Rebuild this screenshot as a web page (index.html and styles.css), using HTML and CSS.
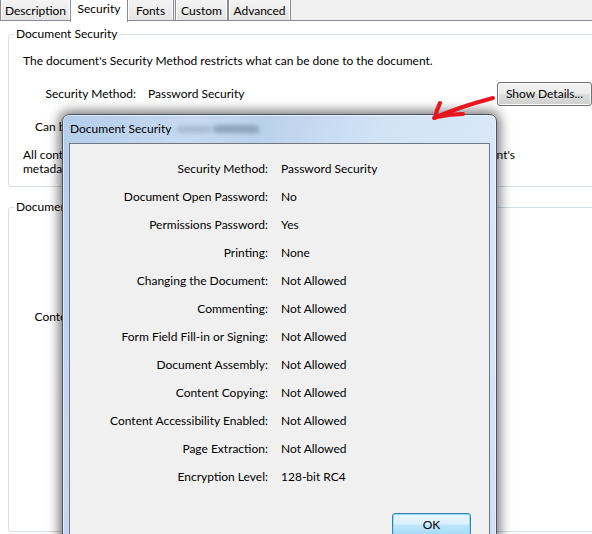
FILE: index.html
```html
<!DOCTYPE html>
<html>
<head>
<meta charset="utf-8">
<link rel="stylesheet" href="styles.css">
</head>
<body>
<div class="window">
  <div class="tabs">
    <div class="tab t-desc">Description</div>
    <div class="tab sel t-sec">Security</div>
    <div class="tab t-fonts">Fonts</div>
    <div class="tab t-custom">Custom</div>
    <div class="tab t-adv">Advanced</div>
  </div>
  <div class="panel">
    <fieldset class="group g1">
      <legend>Document Security</legend>
      <p class="intro">The document's Security Method restricts what can be done to the document.</p>
      <div class="props">
        <span class="l">Security Method:</span>
        <span class="v">Password Security</span>
        <button class="btn">Show Details...</button>
        <span class="l">Can be Opened by:</span>
        <span class="v"></span>
        <span></span>
      </div>
      <p class="allc">All contents of the document are encrypted and search engines cannot access the document's<br>metadata.</p>
    </fieldset>
    <fieldset class="group g2">
      <legend>Document Restrictions Summary</legend>
      <div class="sum">
        <span class="l">Content Copying for Accessibility:</span><span></span>
      </div>
    </fieldset>
  </div>
</div>

<div class="dlg">
  <div class="dlg-title">
    <span class="dlg-name">Document Security</span>
    <span class="blur"><span class="b1"></span><span class="b2"></span></span>
  </div>
  <div class="dlg-client">
    <div class="info">
      <span class="l">Security Method:</span><span>Password Security</span>
      <span class="l">Document Open Password:</span><span>No</span>
      <span class="l">Permissions Password:</span><span>Yes</span>
      <span class="l">Printing:</span><span>None</span>
      <span class="l">Changing the Document:</span><span>Not Allowed</span>
      <span class="l">Commenting:</span><span>Not Allowed</span>
      <span class="l">Form Field Fill-in or Signing:</span><span>Not Allowed</span>
      <span class="l">Document Assembly:</span><span>Not Allowed</span>
      <span class="l">Content Copying:</span><span>Not Allowed</span>
      <span class="l">Content Accessibility Enabled:</span><span>Not Allowed</span>
      <span class="l">Page Extraction:</span><span>Not Allowed</span>
      <span class="l">Encryption Level:</span><span>128-bit RC4</span>
    </div>
    <div class="ok-row"><button class="ok">OK</button></div>
  </div>
</div>

<svg class="arrow" width="592" height="534" viewBox="0 0 592 534">
  <path d="M493,98 C474,103 452,110 434,118" />
  <path d="M435,118 C436,112 438,107 440,103" />
  <path d="M437,117 C446,115 455,114 463,114" />
</svg>
</body>
</html>
```

FILE: styles.css
```css
html, body {
  margin: 0;
  width: 592px;
  height: 534px;
  overflow: hidden;
}
body {
  position: relative;
  font: 12px/14px Lato, "Liberation Sans", sans-serif;
  color: #000;
  background: #fff;
}
.window {
  width: 620px;
}
.tabs {
  display: flex;
  height: 20px;
  border-bottom: 1px solid #898c95;
  background: #f0f0f0;
  position: relative;
}
.tab {
  box-sizing: border-box;
  height: 20px;
  border: 1px solid #898c95;
  border-top: none;
  border-bottom: none;
  background: linear-gradient(#f4f4f4, #e4e4e4);
  box-shadow: inset 1px 0 #fdfdfd, inset -1px 0 #fdfdfd;
  display: flex;
  align-items: center;
  justify-content: center;
  padding-top: 2px;
}
.tab.sel {
  background: #fff;
  box-shadow: none;
  height: 22px;
  margin-bottom: -2px;
  padding-top: 0;
  padding-bottom: 4px;
  position: relative;
  z-index: 1;
}
.t-desc { width: 71px; }
.t-sec { width: 58px; margin-left: -1px; }
.t-fonts { width: 47px; margin-left: -1px; }
.t-custom { width: 53px; margin-left: 1px; }
.t-adv { width: 63px; }

.panel {
  padding-top: 6px;
}
.group {
  margin: 0 8px;
  border: 1px solid #d5dfe5;
  border-radius: 3px;
  min-width: 0;
}
.group legend {
  padding: 0 2px;
  margin-left: -9px;
  line-height: 14px;
}
.g1 {
  padding: 13px 19px 10px 14px;
}
.intro, .allc {
  margin: 0;
}
.props {
  display: grid;
  grid-template-columns: 113px 1fr auto;
  column-gap: 12px;
  row-gap: 14px;
  align-items: center;
  margin-top: 14px;
}
.props .l, .sum .l, .info .l {
  text-align: right;
}
.allc {
  margin-top: 14px;
}
.btn {
  font: inherit;
  color: #000;
  width: 95px;
  height: 24px;
  padding: 0;
  border: 1px solid #707070;
  border-radius: 3px;
  background: linear-gradient(#f2f2f2 0%, #ebebeb 48%, #dddddd 52%, #cfcfcf 100%);
  box-shadow: inset 0 0 0 1px #fbfbfb;
}
.g2 {
  margin-top: 13px;
  box-sizing: border-box;
  height: 332px;
  padding: 96px 19px 0 14px;
}
.sum {
  display: grid;
  grid-template-columns: 189px 1fr;
  column-gap: 12px;
  grid-auto-rows: 14px;
  align-items: center;
}

.dlg {
  position: absolute;
  left: 62px;
  top: 114px;
  width: 435px;
  height: 440px;
  box-sizing: border-box;
  border: 1px solid #4c5662;
  border-radius: 7px 7px 0 0;
  padding: 0 6px;
  background: linear-gradient(110deg, #b4cdea 0%, #c6daf1 22%, #bad1eb 34%, #d2e3f6 55%, #d9e8f8 75%, #cde0f4 100%);
  box-shadow: 0 0 12px 3px rgba(0, 0, 0, 0.55), inset 0 0 0 1px rgba(255, 255, 255, 0.55);
  z-index: 5;
}
.dlg-title {
  height: 28px;
  display: flex;
  align-items: center;
  padding-left: 1px;
  gap: 6px;
}
.blur {
  display: flex;
  align-items: center;
  gap: 2px;
  filter: blur(2px);
}
.b1 {
  width: 34px;
  height: 7px;
  border-radius: 4px;
  background: #a6bbd2;
}
.b2 {
  width: 46px;
  height: 8px;
  border-radius: 4px;
  background: #8ea4bd;
}
.dlg-client {
  border: 1px solid #6d7986;
  background: #f0f0f0;
  height: 420px;
  padding-top: 11px;
}
.info {
  display: grid;
  grid-template-columns: 198px 1fr;
  column-gap: 13px;
  grid-auto-rows: 28px;
  align-items: center;
}
.ok-row {
  display: flex;
  justify-content: flex-end;
  padding-right: 18px;
  margin-top: 22px;
}
.ok {
  font: inherit;
  color: #000;
  width: 79px;
  height: 23px;
  padding: 0;
  border: 1px solid #3c7fb1;
  border-radius: 3px;
  background: linear-gradient(#eaf6fd 0%, #d9f0fc 48%, #bee6fd 52%, #a7d9f5 100%);
  box-shadow: inset 0 0 0 1px #8fdcf8;
}
.arrow {
  position: absolute;
  left: 0;
  top: 0;
  z-index: 10;
  pointer-events: none;
}
.arrow path {
  fill: none;
  stroke: #e8141e;
  stroke-width: 4;
  stroke-linecap: round;
  stroke-linejoin: round;
}
```
